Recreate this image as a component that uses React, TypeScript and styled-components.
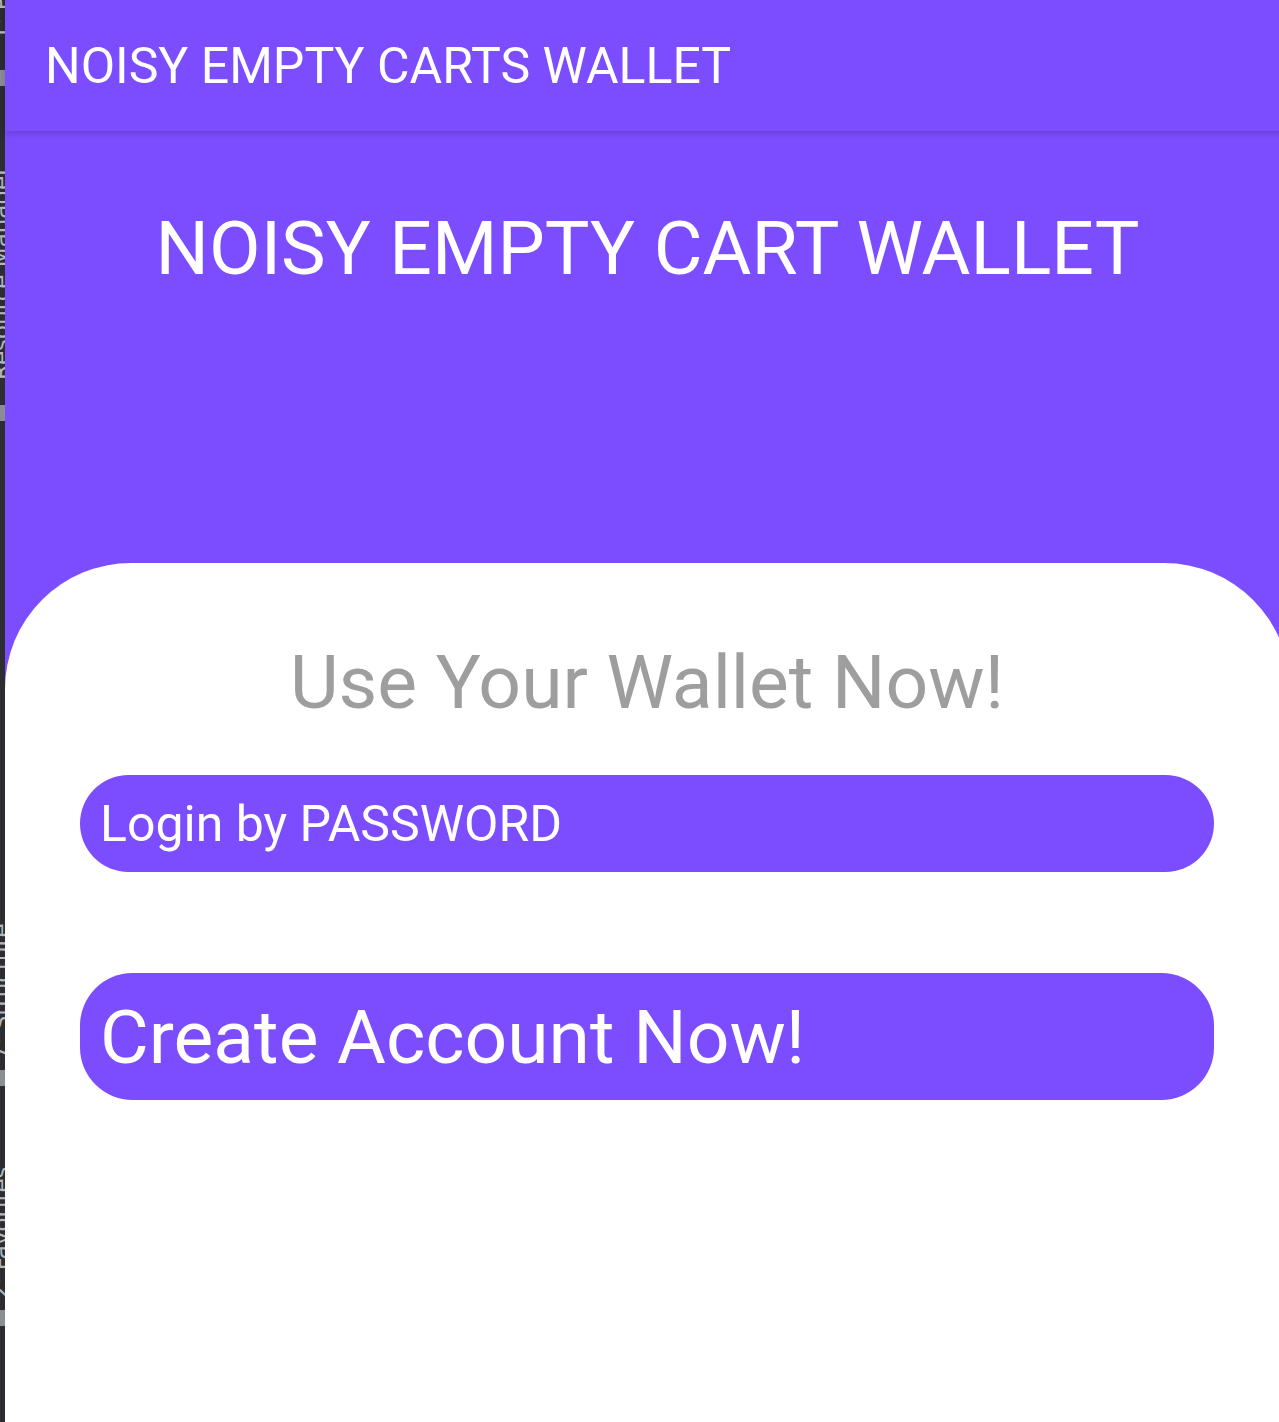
import React from "react";
import styled, { createGlobalStyle } from "styled-components";

const GlobalStyle = createGlobalStyle`
  html, body {
    margin: 0;
    padding: 0;
    background: #ffffff;
    overflow: hidden;
  }
  body {
    font-family: Roboto, "Noto Sans", "Liberation Sans", sans-serif;
  }
  * { box-sizing: border-box; }
`;

const Frame = styled.div`
  display: flex;
  width: 1279px;
  height: 1422px;
  overflow: hidden;
`;

const IdeStrip = styled.aside`
  flex: 0 0 5px;
  background: #2b2d30;
  overflow: hidden;
  display: flex;
  flex-direction: column;
  align-items: flex-start;
`;

const StripLabel = styled.span<{ $top: number; $len: number }>`
  flex: 0 0 auto;
  margin-top: ${(p) => p.$top}px;
  height: ${(p) => p.$len}px;
  margin-left: -11px;
  writing-mode: vertical-rl;
  transform: rotate(180deg);
  font-family: "DejaVu Sans", sans-serif;
  font-size: 23px;
  line-height: 24px;
  color: #b4b7bc;
  white-space: nowrap;
`;

const StripTab = styled.span<{ $top: number }>`
  flex: 0 0 auto;
  margin-top: ${(p) => p.$top}px;
  width: 5px;
  height: 16px;
  background: #8a8d92;
`;

const Screen = styled.main`
  flex: 0 0 1285px;
  display: flex;
  flex-direction: column;
  background: #7c4dff;
`;

const AppBar = styled.header`
  flex: 0 0 131px;
  display: flex;
  align-items: center;
  padding-left: 40px;
  background: #7c4dff;
  box-shadow: 0 3px 6px rgba(0, 0, 0, 0.16);
  position: relative;
  z-index: 1;
`;

const AppBarTitle = styled.h1`
  margin: 0;
  font-weight: 400;
  font-size: 50px;
  color: #ffffff;
`;

const Hero = styled.section`
  flex: 0 0 432px;
  padding-top: 73px;
  text-align: center;
`;

const HeroTitle = styled.h2`
  margin: 0;
  font-weight: 400;
  font-size: 75px;
  line-height: normal;
  color: #ffffff;
`;

const Card = styled.section`
  flex: 1;
  background: #ffffff;
  border-radius: 126px 126px 0 0;
  display: flex;
  flex-direction: column;
  align-items: center;
  padding: 75px 76px 0 75px;
`;

const CardTitle = styled.h3`
  margin: 0;
  font-weight: 400;
  font-size: 75px;
  line-height: normal;
  color: #9e9e9e;
`;

const PillButton = styled.button<{ $height: number; $size: number; $gap: number }>`
  align-self: stretch;
  margin-top: ${(p) => p.$gap}px;
  height: ${(p) => p.$height}px;
  border: none;
  border-radius: 52.5px;
  background: #7c4dff;
  color: #ffffff;
  font-family: Roboto, "Noto Sans", sans-serif;
  font-size: ${(p) => p.$size}px;
  font-weight: 400;
  line-height: normal;
  text-align: left;
  padding: 0 20px;
  display: flex;
  align-items: center;
  cursor: pointer;
`;

export default function App() {
  return (
    <>
      <GlobalStyle />
      <Frame>
        <IdeStrip>
          <StripLabel $top={-20} $len={60}>1: Project</StripLabel>
          <StripTab $top={30} />
          <StripLabel $top={64} $len={230}>Resource Manager</StripLabel>
          <StripTab $top={25} />
          <StripLabel $top={489} $len={150}>7: Structure</StripLabel>
          <StripTab $top={10} />
          <StripLabel $top={64} $len={150}>2: Favorites</StripLabel>
          <StripTab $top={10} />
        </IdeStrip>
        <Screen>
          <AppBar>
            <AppBarTitle>NOISY EMPTY CARTS WALLET</AppBarTitle>
          </AppBar>
          <Hero>
            <HeroTitle>NOISY EMPTY CART WALLET</HeroTitle>
          </Hero>
          <Card>
            <CardTitle>Use Your Wallet Now!</CardTitle>
            <PillButton $height={97} $size={50} $gap={49}>
              Login by PASSWORD
            </PillButton>
            <PillButton $height={127} $size={75} $gap={101}>
              Create Account Now!
            </PillButton>
          </Card>
        </Screen>
      </Frame>
    </>
  );
}
